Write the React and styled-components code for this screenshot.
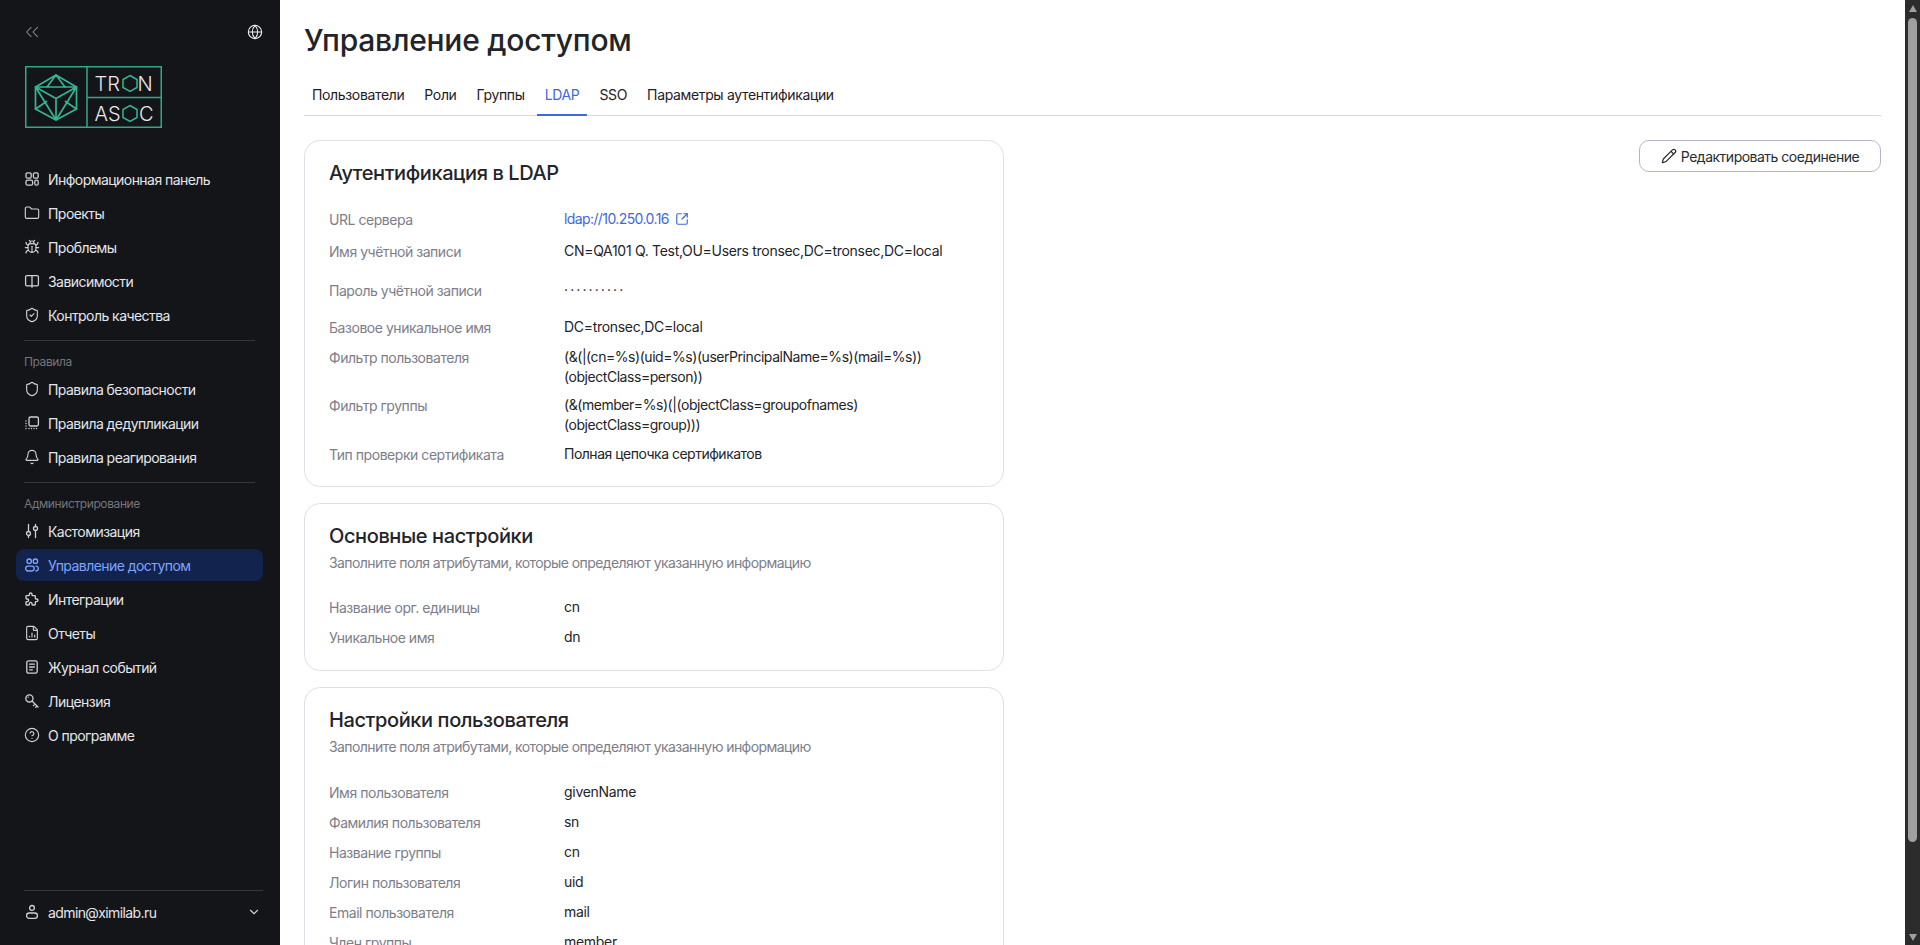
import React from 'react'
import styled, { createGlobalStyle } from 'styled-components'
import {
  Folder, Bug, ShieldCheck, Shield, Bell,
  FileChartColumn, CircleHelp, ChevronDown, ChevronsLeft,
  Globe, Pencil, SquareArrowOutUpRight,
} from 'lucide-react'
import { TbPuzzle } from 'react-icons/tb'

const GlobalStyle = createGlobalStyle`
  html, body, #root { margin: 0; height: 100%; }
  body {
    overflow: hidden;
    font-family: Inter, "Noto Sans", sans-serif;
    font-size: 14px;
    color: #23242a;
  }
  * { box-sizing: border-box; }
`

function Icon({ children }) {
  return (
    <svg width="16" height="16" viewBox="0 0 16 16" fill="none" stroke="currentColor" strokeWidth="1.3" strokeLinecap="round" strokeLinejoin="round">
      {children}
    </svg>
  )
}

const DashboardIcon = () => (
  <Icon>
    <rect x="2" y="1.8" width="5.2" height="5.4" rx="1.5" />
    <rect x="9.4" y="1.8" width="4.8" height="5.4" rx="1.5" />
    <rect x="2" y="9.2" width="6.6" height="5" rx="1.5" />
    <rect x="10.8" y="9.2" width="3.4" height="5" rx="1.5" />
  </Icon>
)

const BookIcon = () => (
  <Icon>
    <rect x="1.6" y="2.6" width="12.8" height="10.2" rx="1.4" />
    <path d="M8 2.6v11.6" />
  </Icon>
)

const DedupeIcon = () => (
  <Icon>
    <rect x="5" y="2" width="9.4" height="9" rx="1.5" />
    <path d="M2 6h.01M2 8.5h.01M2 11h.01M2 13.5h.01M5 13.5h.01M7.5 13.5h.01M10 13.5h.01M12.5 13.5h.01" strokeWidth="1.4" />
  </Icon>
)

const SlidersIcon = () => (
  <Icon>
    <circle cx="4.5" cy="10.5" r="2" />
    <circle cx="11.5" cy="5.5" r="2" />
    <path d="M4.5 1.5v7M4.5 12.5v2M11.5 1.5v2M11.5 7.5v7" />
  </Icon>
)

const UsersIcon = () => (
  <Icon>
    <circle cx="5.2" cy="4.2" r="2.2" />
    <circle cx="11.4" cy="4.2" r="2.2" />
    <rect x="1.6" y="9.2" width="8.6" height="4.8" rx="2.4" />
    <path d="M12 9.2a2.4 2.4 0 0 1 2.4 2.4 2.4 2.4 0 0 1-2.4 2.4" />
  </Icon>
)

const JournalIcon = () => (
  <Icon>
    <rect x="2.8" y="1.8" width="10.4" height="12.4" rx="1.8" />
    <path d="M5.6 5.2h4.8M5.6 8h4.8M5.6 10.8h2.8" />
  </Icon>
)

const KeyIcon = () => (
  <Icon>
    <circle cx="5.4" cy="5.4" r="3.6" />
    <path d="M8 8l6 6M11 11l-1.6 1.6M13 13l-1.4 1.4" />
    <path d="M4.2 4.2h.01" />
  </Icon>
)

const UserIcon = () => (
  <Icon>
    <circle cx="8" cy="3.9" r="2.4" />
    <rect x="2.6" y="9" width="10.8" height="5.4" rx="2.6" />
  </Icon>
)

function Logo() {
  return (
    <svg width="137" height="62" viewBox="0 0 137 62" fill="none">
      <g stroke="#2fa98a" strokeWidth="1.5">
        <rect x="0.75" y="0.75" width="135.5" height="60.5" />
        <path d="M62 1v60M62 31.5h74" />
      </g>
      <g stroke="#33b595" strokeWidth="1.7" strokeLinejoin="round" strokeLinecap="round">
        <path d="M31 9l20.5 12v22L31 54 10.5 43V21z" />
        <path d="M10.5 21h41M31 9l-9 12M31 9l9 12M10.5 21L31 32.5 51.5 21M31 32.5V54M10.5 21L31 54 51.5 21M10.5 43l11-7.5M51.5 43l-11-7.5" />
      </g>
      <g fill="#e8e9ec" fontFamily="Inter, sans-serif" fontSize="20" fontWeight="300">
        <text x="69.5" y="24.6">TR</text>
        <text x="112.5" y="24.6">N</text>
        <text x="69.5" y="54.5">AS</text>
        <text x="114" y="54.5">C</text>
      </g>
      <g stroke="#33b595" strokeWidth="1.5">
        <path d="M105 9.5l7 4v8l-7 4-7-4v-8z" />
        <path d="M105 39.5l7 4v8l-7 4-7-4v-8z" />
      </g>
    </svg>
  )
}

const topNav = [
  { label: 'Информационная панель', icon: <DashboardIcon /> },
  { label: 'Проекты', icon: <Folder size={16} strokeWidth={1.7} /> },
  { label: 'Проблемы', icon: <Bug size={16} strokeWidth={1.7} /> },
  { label: 'Зависимости', icon: <BookIcon /> },
  { label: 'Контроль качества', icon: <ShieldCheck size={16} strokeWidth={1.7} /> },
]

const rulesNav = [
  { label: 'Правила безопасности', icon: <Shield size={16} strokeWidth={1.7} /> },
  { label: 'Правила дедупликации', icon: <DedupeIcon /> },
  { label: 'Правила реагирования', icon: <Bell size={16} strokeWidth={1.7} /> },
]

const adminNav = [
  { label: 'Кастомизация', icon: <SlidersIcon /> },
  { label: 'Управление доступом', icon: <UsersIcon />, active: true },
  { label: 'Интеграции', icon: <TbPuzzle size={16} /> },
  { label: 'Отчеты', icon: <FileChartColumn size={16} strokeWidth={1.7} /> },
  { label: 'Журнал событий', icon: <JournalIcon /> },
  { label: 'Лицензия', icon: <KeyIcon /> },
  { label: 'О программе', icon: <CircleHelp size={16} strokeWidth={1.7} /> },
]

const tabs = ['Пользователи', 'Роли', 'Группы', 'LDAP', 'SSO', 'Параметры аутентификации']

const ldapRows = [
  { label: 'URL сервера', value: 'ldap://10.250.0.16', link: true, after: 12 },
  { label: 'Имя учётной записи', value: 'CN=QA101 Q. Test,OU=Users tronsec,DC=tronsec,DC=local', after: 19 },
  { label: 'Пароль учётной записи', value: '··········', spacing: 2.1, after: 17 },
  { label: 'Базовое уникальное имя', value: 'DC=tronsec,DC=local', after: 10 },
  { label: 'Фильтр пользователя', value: '(&(|(cn=%s)(uid=%s)(userPrincipalName=%s)(mail=%s))(objectClass=person))', spacing: -0.45, after: 8 },
  { label: 'Фильтр группы', value: '(&(member=%s)(|(objectClass=groupofnames)(objectClass=group)))', spacing: -0.45, after: 9 },
  { label: 'Тип проверки сертификата', value: 'Полная цепочка сертификатов', spacing: -0.5, after: 0 },
]

const baseRows = [
  { label: 'Название орг. единицы', value: 'cn', after: 10 },
  { label: 'Уникальное имя', value: 'dn', after: 1 },
]

const userRows = [
  { label: 'Имя пользователя', value: 'givenName', after: 10 },
  { label: 'Фамилия пользователя', value: 'sn', after: 10 },
  { label: 'Название группы', value: 'cn', after: 10 },
  { label: 'Логин пользователя', value: 'uid', after: 10 },
  { label: 'Email пользователя', value: 'mail', after: 10 },
  { label: 'Член группы', value: 'member', after: 0 },
]

function NavList({ items }) {
  return items.map((item) => (
    <NavItem key={item.label} $active={item.active}>
      {item.icon}
      {item.label}
    </NavItem>
  ))
}

function Details({ rows, top }) {
  return (
    <DetailList $top={top}>
      {rows.map((row) => (
        <Row key={row.label} $after={row.after}>
          <RowLabel>{row.label}</RowLabel>
          {row.link ? (
            <LinkValue>
              {row.value}
              <SquareArrowOutUpRight size={14} />
            </LinkValue>
          ) : (
            <RowValue $spacing={row.spacing}>{row.value}</RowValue>
          )}
        </Row>
      ))}
    </DetailList>
  )
}

export default function App() {
  return (
    <Layout>
      <GlobalStyle />
      <Sidebar>
        <SideTop>
          <ChevronsLeft size={22} color="#8a8b92" strokeWidth={1.1} />
          <Globe size={16} color="#f0f0f2" strokeWidth={1.6} />
        </SideTop>
        <LogoBox><Logo /></LogoBox>
        <Nav>
          <NavList items={topNav} />
          <Divider />
          <NavGroupTitle>Правила</NavGroupTitle>
          <NavList items={rulesNav} />
          <Divider />
          <NavGroupTitle>Администрирование</NavGroupTitle>
          <NavList items={adminNav} />
        </Nav>
        <UserRow>
          <UserIcon />
          <UserName>admin@ximilab.ru</UserName>
          <ChevronDown size={14} />
        </UserRow>
      </Sidebar>
      <Main>
        <Title>Управление доступом</Title>
        <Tabs>
          {tabs.map((tab) => (
            <Tab key={tab} $active={tab === 'LDAP'}>{tab}</Tab>
          ))}
        </Tabs>
        <Content>
          <Cards>
            <Card>
              <CardTitle>Аутентификация в LDAP</CardTitle>
              <Details rows={ldapRows} top={22} />
            </Card>
            <Card>
              <CardTitle>Основные настройки</CardTitle>
              <CardHint>Заполните поля атрибутами, которые определяют указанную информацию</CardHint>
              <Details rows={baseRows} top={24} />
            </Card>
            <Card>
              <CardTitle>Настройки пользователя</CardTitle>
              <CardHint>Заполните поля атрибутами, которые определяют указанную информацию</CardHint>
              <Details rows={userRows} top={25} />
            </Card>
          </Cards>
          <EditButton>
            <Pencil size={16} strokeWidth={1.8} />
            Редактировать соединение
          </EditButton>
        </Content>
      </Main>
      <ScrollTrack>
        <ArrowUp />
        <ScrollThumb />
        <ArrowDown />
      </ScrollTrack>
    </Layout>
  )
}

const Layout = styled.div`
  display: flex;
  height: 100vh;
  background: #fff;
`

const Sidebar = styled.aside`
  flex: 0 0 280px;
  display: flex;
  flex-direction: column;
  background: #141518;
  color: #e3e5ec;
  padding: 23px 17px 0 16px;
`

const SideTop = styled.div`
  display: flex;
  justify-content: space-between;
  align-items: center;
  height: 18px;
  padding: 0 0 0 5px;
`

const LogoBox = styled.div`
  display: flex;
  height: 62px;
  margin: 25px 0 0 9px;
`

const Nav = styled.nav`
  display: flex;
  flex-direction: column;
  margin-top: 35px;
  flex: 1;
`

const NavItem = styled.div`
  display: flex;
  align-items: center;
  gap: 8px;
  height: 32px;
  margin-bottom: 2px;
  padding: 0 8px;
  border-radius: 8px;
  font-size: 14px;
  letter-spacing: -0.55px;
  background: ${(p) => (p.$active ? '#12234d' : 'transparent')};
  color: ${(p) => (p.$active ? '#7fa4ff' : '#e3e5ec')};
  svg { flex: none; color: ${(p) => (p.$active ? '#7fa4ff' : '#cfd0d6')}; }
`

const Divider = styled.div`
  height: 1px;
  margin: 7px 8px 0;
  width: 231px;
  background: #36373c;
`

const NavGroupTitle = styled.div`
  font-size: 12px;
  line-height: 16px;
  letter-spacing: -0.4px;
  margin: 13px 8px 3px;
  color: #73747c;
`

const UserRow = styled.div`
  display: flex;
  align-items: center;
  gap: 8px;
  height: 55px;
  padding: 0 2px 12px 0;
  margin-left: 8px;
  border-top: 1px solid #36373c;
  svg { flex: none; color: #cfd0d6; }
`

const UserName = styled.span`
  flex: 1;
  letter-spacing: -0.6px;
`

const Main = styled.main`
  flex: 1;
  min-width: 0;
  height: 100vh;
  overflow-y: auto;
  padding: 0 24px 70px;
`

const ScrollTrack = styled.div`
  flex: 0 0 15px;
  display: flex;
  flex-direction: column;
  align-items: center;
  background: #2c2c2c;
`

const ScrollThumb = styled.div`
  width: 9px;
  height: 824px;
  margin-top: 6px;
  border-radius: 5px;
  background: #9f9f9f;
`

const ArrowUp = styled.div`
  margin-top: 5px;
  width: 0;
  height: 0;
  border-left: 4.5px solid transparent;
  border-right: 4.5px solid transparent;
  border-bottom: 7px solid #9f9f9f;
`

const ArrowDown = styled.div`
  margin-top: 92px;
  width: 0;
  height: 0;
  border-left: 4.5px solid transparent;
  border-right: 4.5px solid transparent;
  border-top: 7px solid #9f9f9f;
`

const Title = styled.h1`
  margin: 0;
  padding-top: 21px;
  height: 76px;
  font-size: 30px;
  line-height: 38px;
  font-weight: 500;
  letter-spacing: -0.25px;
  color: #23242a;
`

const Tabs = styled.div`
  display: flex;
  gap: 4px;
  height: 40px;
  border-bottom: 1px solid #d8d9e0;
`

const Tab = styled.div`
  padding: 0 8px;
  height: 40px;
  line-height: 38px;
  font-size: 14px;
  letter-spacing: -0.35px;
  color: ${(p) => (p.$active ? '#3e68e0' : '#1f2026')};
  border-bottom: 2px solid ${(p) => (p.$active ? '#3e68e0' : 'transparent')};
`

const Content = styled.div`
  display: flex;
  justify-content: space-between;
  align-items: flex-start;
  margin-top: 24px;
`

const Cards = styled.div`
  display: flex;
  flex-direction: column;
  gap: 16px;
  width: 700px;
`

const Card = styled.section`
  border: 1px solid #dfe0e7;
  border-radius: 16px;
  padding: 18px 24px 22px;
`

const CardTitle = styled.h2`
  margin: 0 0 3px;
  font-size: 20px;
  line-height: 28px;
  font-weight: 500;
  letter-spacing: -0.4px;
  color: #23242a;
`

const CardHint = styled.p`
  margin: 0;
  font-size: 14px;
  line-height: 20px;
  letter-spacing: -0.58px;
  color: #7d7e8a;
`

const DetailList = styled.div`
  margin-top: ${(p) => p.$top}px;
`

const Row = styled.div`
  display: grid;
  grid-template-columns: 235px 1fr;
  margin-bottom: ${(p) => p.$after}px;
  line-height: 20px;
`

const RowLabel = styled.div`
  color: #7d7e8a;
  padding-top: 1px;
  margin-bottom: -1px;
  letter-spacing: -0.46px;
`

const RowValue = styled.div`
  color: #23242a;
  overflow-wrap: anywhere;
  letter-spacing: ${(p) => p.$spacing ?? -0.3}px;
`

const LinkValue = styled.div`
  display: flex;
  align-items: center;
  gap: 6px;
  color: #3e68e0;
  letter-spacing: -0.6px;
`

const EditButton = styled.button`
  display: flex;
  align-items: center;
  justify-content: center;
  gap: 4px;
  width: 242px;
  height: 32px;
  border: 1px solid #b3b6c6;
  border-radius: 10px;
  background: #fff;
  font-family: inherit;
  font-size: 14px;
  letter-spacing: -0.5px;
  color: #2a2b33;
`
